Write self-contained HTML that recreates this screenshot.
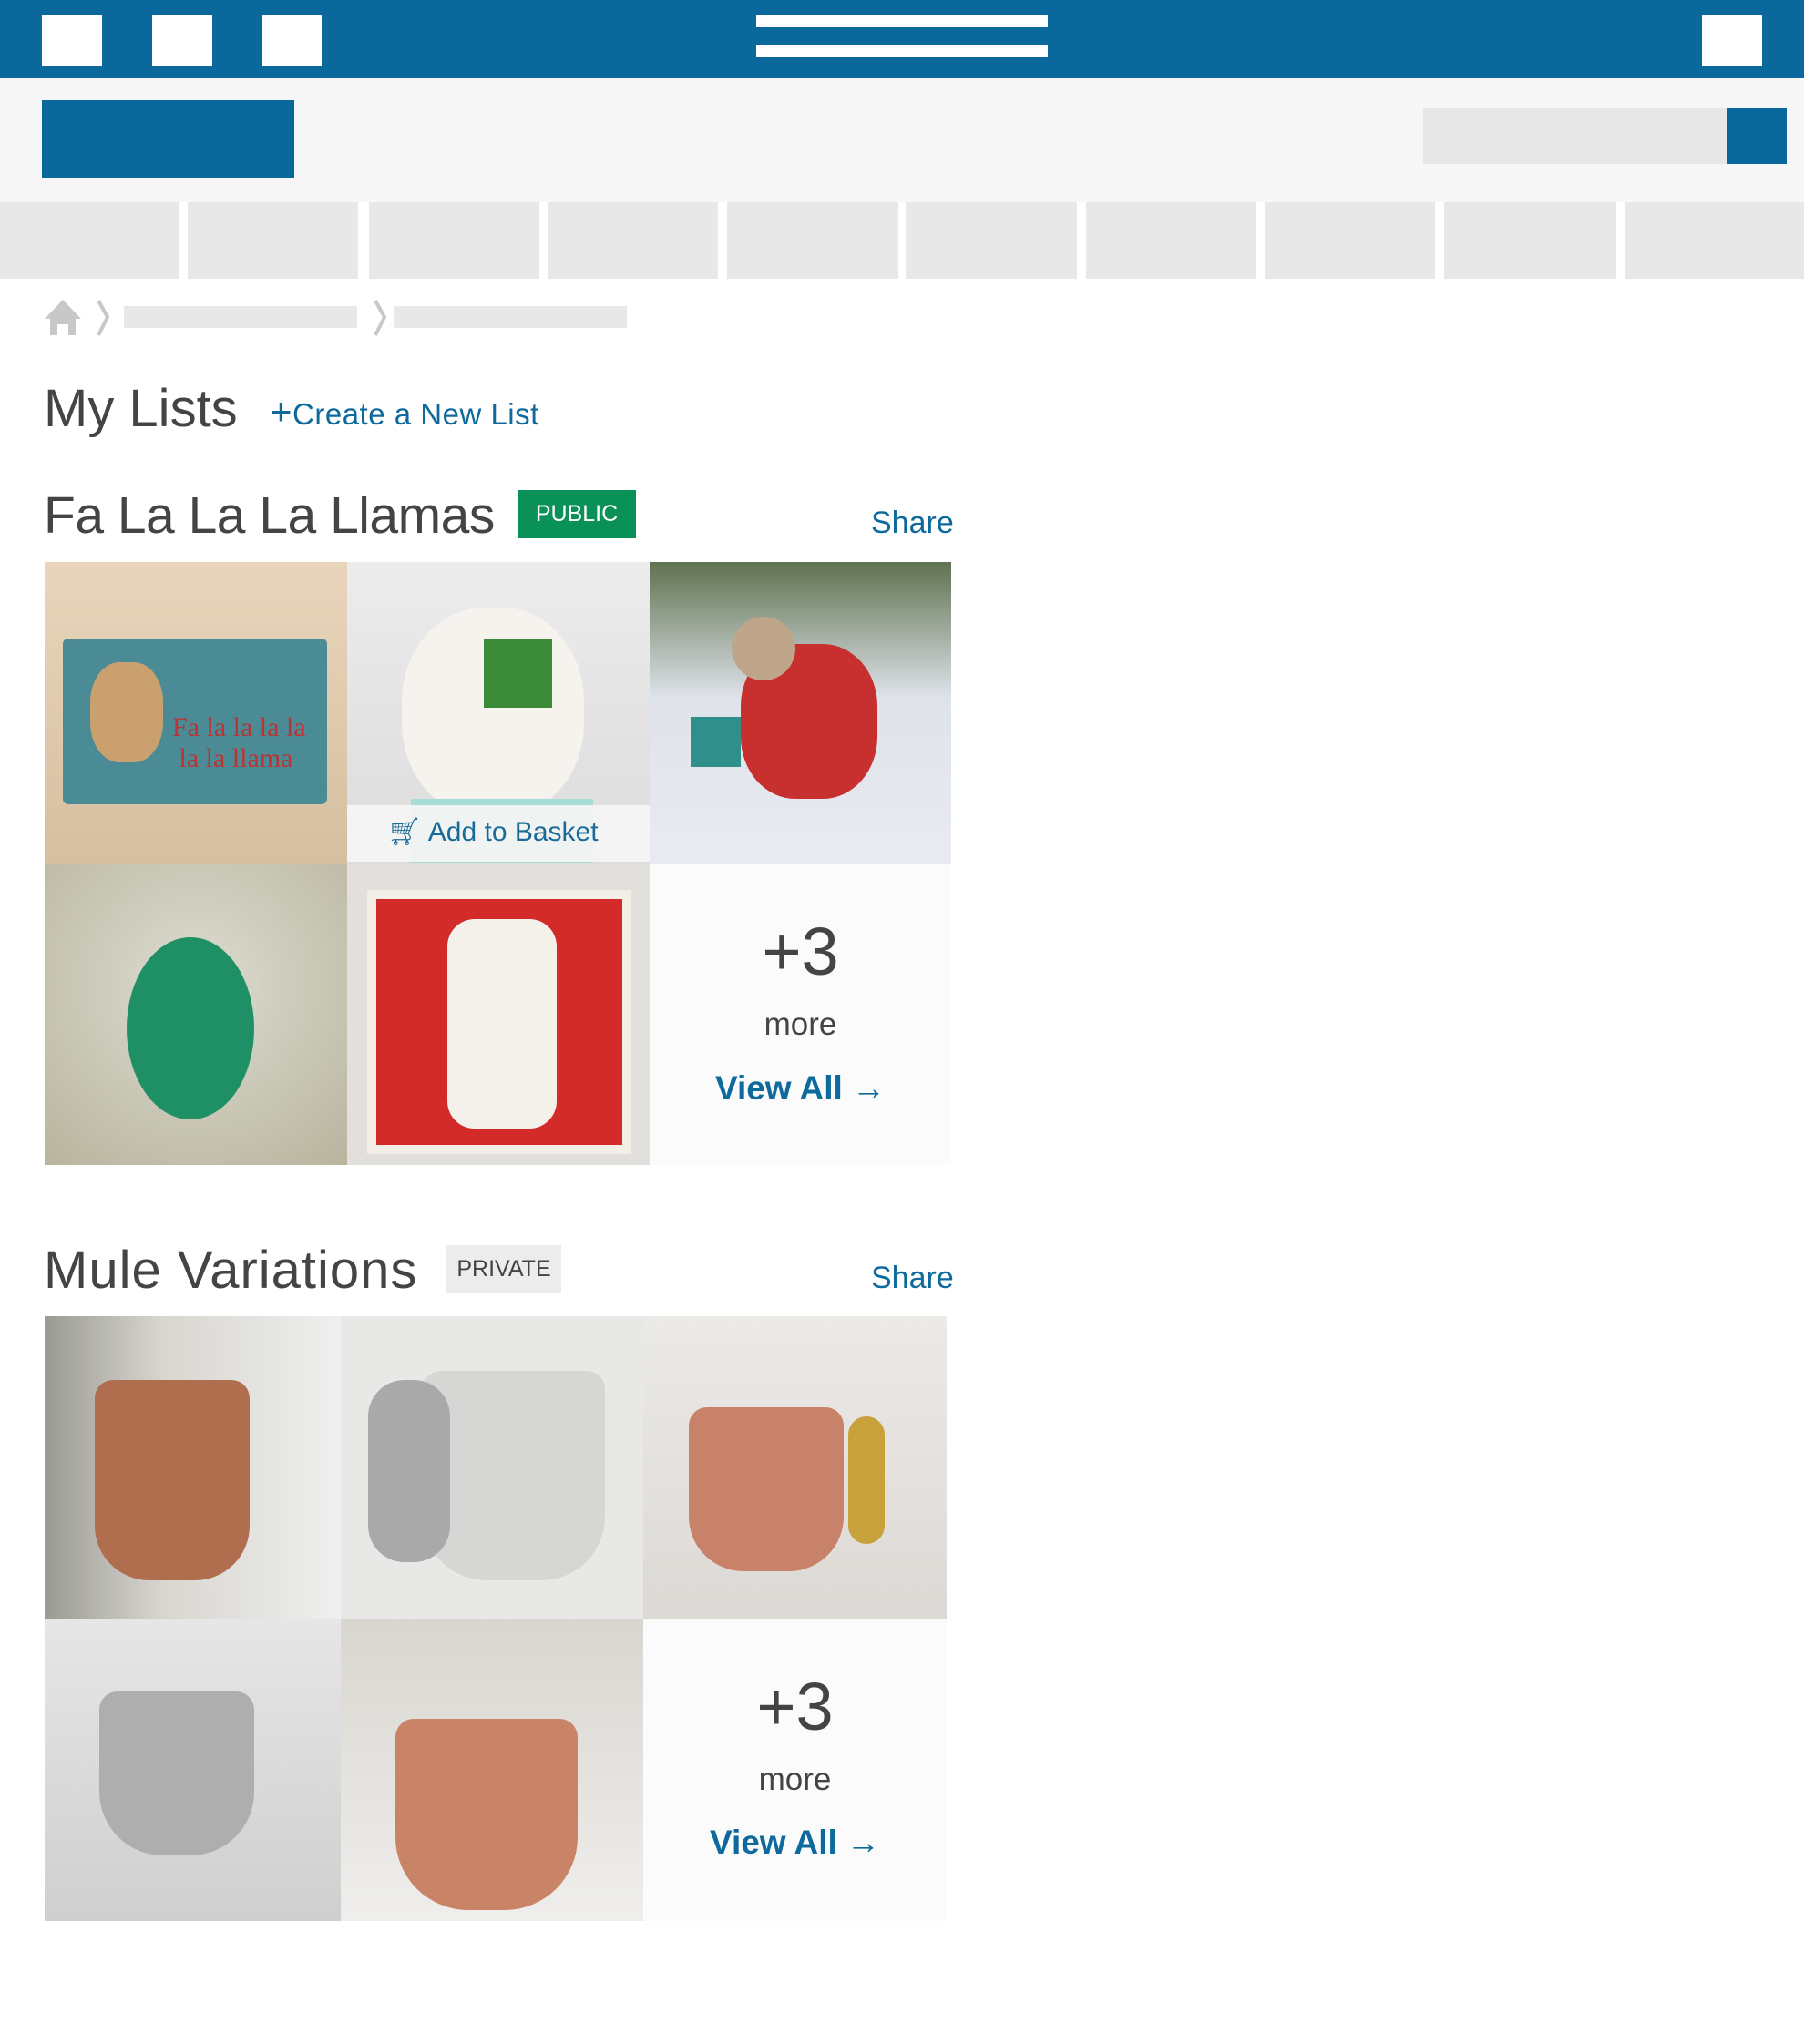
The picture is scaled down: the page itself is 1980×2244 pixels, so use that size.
<!DOCTYPE html>
<html><head><meta charset="utf-8"><style>
*{margin:0;padding:0;box-sizing:border-box}
body{width:1980px;height:2244px;background:#fff;font-family:"Liberation Sans",sans-serif;position:relative;overflow:hidden}
.a{position:absolute}
.w{background:#fff}
.tab{position:absolute;top:222px;height:84px;background:#e8e8e8}
.c{position:absolute;overflow:hidden}
.t{color:#444}
.blue{color:#0e6a9c}
</style></head><body>
<div class="a" style="left:0;top:0;width:1980px;height:86px;background:#0b689c"></div>
<div class="a w" style="left:46px;top:17px;width:66px;height:55px"></div>
<div class="a w" style="left:167px;top:17px;width:66px;height:55px"></div>
<div class="a w" style="left:288px;top:17px;width:65px;height:55px"></div>
<div class="a w" style="left:830px;top:17px;width:320px;height:13px"></div>
<div class="a w" style="left:830px;top:49px;width:320px;height:14px"></div>
<div class="a w" style="left:1868px;top:17px;width:66px;height:55px"></div>
<div class="a" style="left:0;top:86px;width:1980px;height:136px;background:#f7f7f7"></div>
<div class="a" style="left:46px;top:110px;width:277px;height:85px;background:#0b689c"></div>
<div class="a" style="left:1562px;top:119px;width:334px;height:61px;background:#e8e8e8"></div>
<div class="a" style="left:1896px;top:119px;width:65px;height:61px;background:#0b689c"></div>
<div class="tab" style="left:0;width:197px"></div>
<div class="tab" style="left:206px;width:187px"></div>
<div class="tab" style="left:405px;width:187px"></div>
<div class="tab" style="left:601px;width:187px"></div>
<div class="tab" style="left:798px;width:188px"></div>
<div class="tab" style="left:994px;width:188px"></div>
<div class="tab" style="left:1192px;width:187px"></div>
<div class="tab" style="left:1388px;width:187px"></div>
<div class="tab" style="left:1585px;width:189px"></div>
<div class="tab" style="left:1783px;width:197px"></div>
<svg class="a" style="left:46px;top:326px" width="420" height="46">
<path d="M3 24 L23 3 L43 24 L37 24 L37 42 L29 42 L29 30 L17 30 L17 42 L9 42 L9 24Z" fill="#c8c8c8"/>
<path d="M62 4 L72 22 L62 42" stroke="#c8c8c8" stroke-width="4" fill="none"/>
<path d="M366 4 L376 22 L366 42" stroke="#c8c8c8" stroke-width="4" fill="none"/>
</svg>
<div class="a" style="left:136px;top:336px;width:256px;height:24px;background:#e8e8e8"></div>
<div class="a" style="left:432px;top:336px;width:256px;height:24px;background:#e8e8e8"></div>
<div class="a t" style="left:48px;top:414px;font-size:58px;line-height:70px">My Lists</div>
<div class="a blue" style="left:296px;top:430px;font-size:33px;line-height:44px;letter-spacing:0.5px"><b style="font-size:42px;font-weight:normal">+</b>Create a New List</div>

<div class="a t" style="left:48px;top:531px;font-size:57px;line-height:70px;letter-spacing:-0.5px">Fa La La La Llamas</div>
<div class="a" style="left:568px;top:538px;width:130px;height:53px;background:#0a9158;color:#fff;font-size:25px;line-height:53px;text-align:center">PUBLIC</div>
<div class="a blue" style="left:956px;top:555px;font-size:34px">Share</div>

<div class="c" style="left:49px;top:617px;width:332px;height:332px;background:linear-gradient(#e8d5bb,#d6bfa0)"><div class="a" style="left:20px;top:84px;width:290px;height:182px;background:#4a8b96;border-radius:6px"></div><div class="a" style="left:50px;top:110px;width:80px;height:110px;background:#c9a06e;border-radius:40%"></div><div class="a" style="left:140px;top:165px;color:#b33;font-size:30px;font-family:'Liberation Serif',serif">Fa la la la la<br>&nbsp;la la llama</div></div>
<div class="c" style="left:381px;top:617px;width:332px;height:332px;background:linear-gradient(#ececec,#dcdcdc)"><div class="a" style="left:60px;top:50px;width:200px;height:230px;background:#f6f3ee;border-radius:45%"></div><div class="a" style="left:150px;top:85px;width:75px;height:75px;background:#3b8a3a"></div><div class="a" style="left:70px;top:260px;width:200px;height:70px;background:#a8dcd6"></div></div>
<div class="a" style="left:381px;top:884px;width:332px;height:62px;background:rgba(245,245,245,.92)"></div>
<div class="a blue" style="left:425px;top:896px;font-size:30px;color:#1a6b9a">🛒︎ Add to Basket</div>
<div class="c" style="left:713px;top:617px;width:331px;height:332px;background:linear-gradient(#5f7250,#dfe3ea 45%,#e9ebf0)"><div class="a" style="left:100px;top:90px;width:150px;height:170px;background:#c83030;border-radius:40%"></div><div class="a" style="left:90px;top:60px;width:70px;height:70px;background:#bfa68a;border-radius:50%"></div><div class="a" style="left:45px;top:170px;width:55px;height:55px;background:#2f8f8a"></div></div>
<div class="c" style="left:49px;top:949px;width:332px;height:330px;background:radial-gradient(circle at 50% 40%,#dcdcd0,#b9b49e)"><div class="a" style="left:90px;top:80px;width:140px;height:200px;background:#1f8f66;border-radius:50%"></div></div>
<div class="c" style="left:381px;top:949px;width:332px;height:330px;background:#e2e0dc"><div class="a" style="left:22px;top:28px;width:290px;height:290px;background:#d32a2a;border:10px solid #f3efe6"></div><div class="a" style="left:110px;top:60px;width:120px;height:230px;background:#f4f1ea;border-radius:30px"></div></div>
<div class="a" style="left:713px;top:949px;width:331px;height:330px;background:#fcfbfb"></div>
<div class="a t" style="left:713px;top:1003px;width:331px;text-align:center;font-size:74px;line-height:84px">+3</div>
<div class="a t" style="left:713px;top:1103px;width:331px;text-align:center;font-size:35px;line-height:44px">more</div>
<div class="a blue" style="left:713px;top:1171px;width:331px;text-align:center;font-size:37px;line-height:48px;font-weight:bold">View All →</div>

<div class="a t" style="left:48px;top:1360px;font-size:58px;line-height:70px;letter-spacing:1px">Mule Variations</div>
<div class="a" style="left:490px;top:1367px;width:126px;height:53px;background:#ececec;color:#444;font-size:25px;line-height:53px;text-align:center">PRIVATE</div>
<div class="a blue" style="left:956px;top:1384px;font-size:34px">Share</div>

<div class="c" style="left:49px;top:1445px;width:325px;height:332px;background:linear-gradient(90deg,#9a9a95,#d8d6d0 40%,#efefef)"><div class="a" style="left:55px;top:70px;width:170px;height:220px;background:#b06e4f;border-radius:20px 20px 60px 60px"></div></div>
<div class="c" style="left:374px;top:1445px;width:332px;height:332px;background:#e8e8e6"><div class="a" style="left:90px;top:60px;width:200px;height:230px;background:#d6d6d4;border-radius:20px 20px 70px 70px"></div><div class="a" style="left:30px;top:70px;width:90px;height:200px;background:#a9a9a9;border-radius:40px"></div></div>
<div class="c" style="left:706px;top:1445px;width:333px;height:332px;background:linear-gradient(#eceae7,#dcd9d5)"><div class="a" style="left:50px;top:100px;width:170px;height:180px;background:#c9826a;border-radius:20px 20px 60px 60px"></div><div class="a" style="left:225px;top:110px;width:40px;height:140px;background:#c9a13a;border-radius:20px"></div></div>
<div class="c" style="left:49px;top:1777px;width:325px;height:332px;background:linear-gradient(#e6e6e6,#cfcfcf)"><div class="a" style="left:60px;top:80px;width:170px;height:180px;background:#aeaeae;border-radius:20px 20px 70px 70px"></div></div>
<div class="c" style="left:374px;top:1777px;width:332px;height:332px;background:linear-gradient(#d9d6d0,#efeeec)"><div class="a" style="left:60px;top:110px;width:200px;height:210px;background:#c98467;border-radius:20px 20px 80px 80px"></div></div>
<div class="a" style="left:706px;top:1777px;width:333px;height:332px;background:#fcfbfb"></div>
<div class="a t" style="left:706px;top:1832px;width:333px;text-align:center;font-size:74px;line-height:84px">+3</div>
<div class="a t" style="left:706px;top:1932px;width:333px;text-align:center;font-size:35px;line-height:44px">more</div>
<div class="a blue" style="left:706px;top:1999px;width:333px;text-align:center;font-size:37px;line-height:48px;font-weight:bold">View All →</div>
</body></html>
